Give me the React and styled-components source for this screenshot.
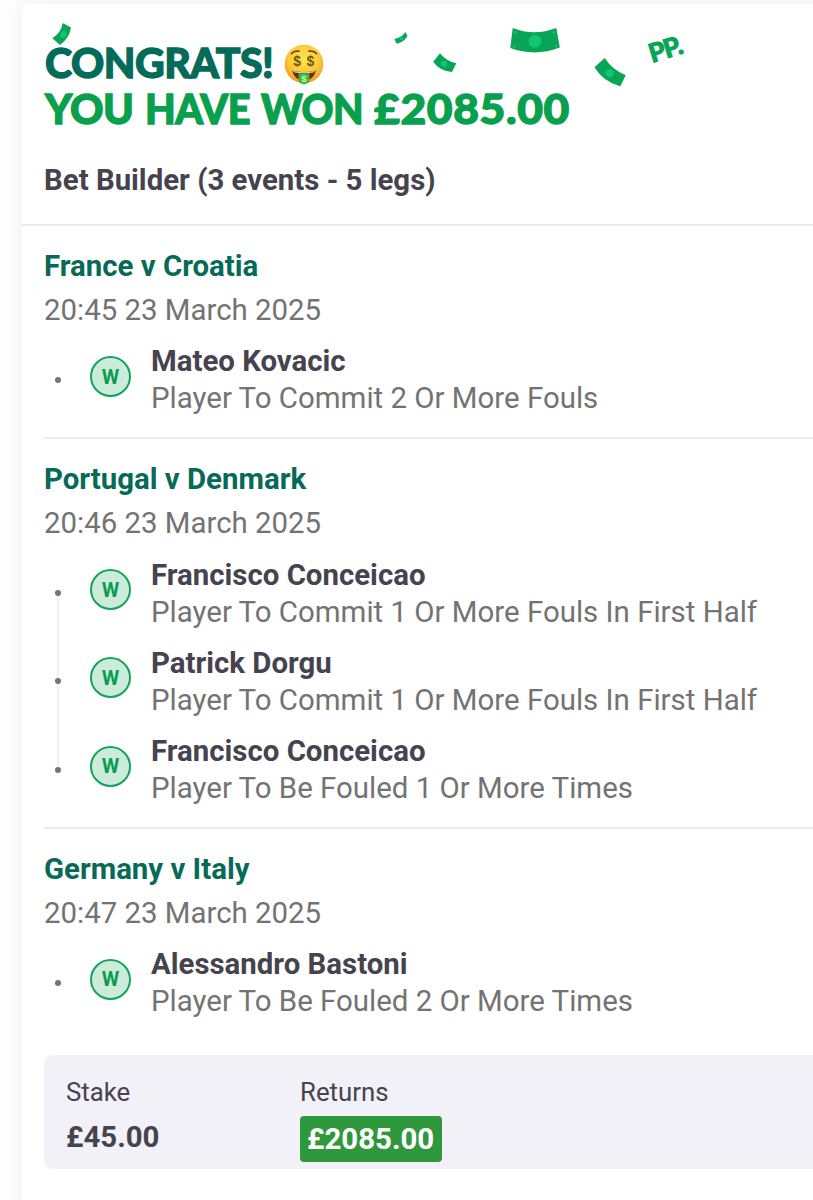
import React from 'react';
import styled, { createGlobalStyle } from 'styled-components';

const GlobalStyle = createGlobalStyle`
  *, *::before, *::after { box-sizing: border-box; }
  html, body { margin: 0; padding: 0; background: #fefefe; }
  body { overflow: hidden; font-family: Roboto, "Liberation Sans", sans-serif; color: #46434f; }
  h1, h2, h3, p, ul { margin: 0; padding: 0; font-weight: inherit; }
`;

const Page = styled.div`
  height: 1200px;
  overflow: hidden;
  padding: 4px 0 0 22px;
`;

const Card = styled.main`
  width: 820px;
  height: 1240px;
  background: #fff;
  border-radius: 8px 0 0 0;
  box-shadow: 0 0 22px rgba(0, 0, 0, 0.07);
`;

const Header = styled.header`
  position: relative;
  height: 222px;
  padding: 35px 0 0 22px;
  border-bottom: 2px solid #e9e9eb;
`;

const Headline = styled.h1`
  font-family: Lato, sans-serif;
  font-weight: 900;
  font-size: 42.5px;
  line-height: 46px;
`;

const HeadLine = styled.span`
  display: flex;
  height: 46px;
  padding-left: 1px;
  color: ${(p) => p.$color};
`;

const Word = styled.span`
  display: block;
  flex: none;
  width: ${(p) => p.$width}px;
  white-space: nowrap;
  letter-spacing: ${(p) => p.$spacing}px;
  transform: scaleX(${(p) => p.$stretch || 1});
  transform-origin: left center;
  -webkit-text-stroke: 1.3px currentColor;
`;

const Emoji = styled.svg`
  width: 40px;
  height: 42px;
  margin-top: 4px;
`;

const Confetti = styled.svg`
  position: absolute;
  left: 0;
  top: 0;
  width: 791px;
  height: 100px;
  pointer-events: none;
`;

const BetType = styled.h2`
  margin-top: 26.5px;
  font-size: 29.4px;
  font-weight: 700;
  line-height: 44px;
`;

const Event = styled.section`
  margin-left: 22px;
  padding: 18px 0 13px;
  border-bottom: 2px solid ${(p) => (p.$last ? 'transparent' : '#ececee')};
`;

const EventTitle = styled.h2`
  font-size: 29.4px;
  font-weight: 700;
  line-height: 44px;
  color: #066a57;
`;

const EventTime = styled.p`
  font-size: 29.4px;
  line-height: 44px;
  color: #737373;
`;

const Legs = styled.ul`
  padding-top: 4px;
  list-style: none;
`;

const Leg = styled.li`
  display: flex;
  height: 88.2px;
`;

const Rail = styled.span`
  display: flex;
  flex-direction: column;
  align-items: center;
  width: 27px;
  margin-right: 19px;
`;

const RailLine = styled.span`
  flex: 1;
  width: 2px;
  background: ${(p) => (p.$on ? '#f0f0f2' : 'transparent')};
`;

const Dot = styled.span`
  width: 6px;
  height: 6px;
  border-radius: 50%;
  background: #737379;
`;

const Badge = styled.span`
  display: flex;
  align-items: center;
  justify-content: center;
  width: 41px;
  height: 41px;
  margin: 20px 20px 0 0;
  border: 2px solid #14a35b;
  border-radius: 50%;
  background: #cdebdb;
  color: #0a9d50;
  font-size: 20px;
  font-weight: 700;
`;

const LegText = styled.div`
  padding-top: 7.4px;
  white-space: nowrap;
`;

const Player = styled.h3`
  font-size: 29.4px;
  font-weight: 700;
  line-height: 37px;
`;

const Market = styled.p`
  font-size: 29.45px;
  line-height: 36.8px;
  color: #737373;
`;

const Summary = styled.footer`
  display: flex;
  height: 114px;
  margin: 13px 0 0 22px;
  padding: 17px 0 0 22px;
  border-radius: 8px;
  background: #f2f1f8;
`;

const Amount = styled.div`
  width: 234px;
`;

const Label = styled.p`
  font-size: 25.8px;
  line-height: 40px;
`;

const Value = styled.p`
  margin-top: 4px;
  font-size: 29.4px;
  font-weight: 700;
  line-height: 43px;
`;

const Payout = styled(Value)`
  width: 142px;
  height: 46px;
  padding-left: 7px;
  line-height: 46px;
  border-radius: 4px;
  background: #2f983c;
  color: #fff;
`;

const events = [
  {
    title: 'France v Croatia',
    time: '20:45 23 March 2025',
    legs: [['Mateo Kovacic', 'Player To Commit 2 Or More Fouls']],
  },
  {
    title: 'Portugal v Denmark',
    time: '20:46 23 March 2025',
    legs: [
      ['Francisco Conceicao', 'Player To Commit 1 Or More Fouls In First Half'],
      ['Patrick Dorgu', 'Player To Commit 1 Or More Fouls In First Half'],
      ['Francisco Conceicao', 'Player To Be Fouled 1 Or More Times'],
    ],
  },
  {
    title: 'Germany v Italy',
    time: '20:47 23 March 2025',
    legs: [['Alessandro Bastoni', 'Player To Be Fouled 2 Or More Times']],
  },
];

const MoneyFace = () => (
  <Emoji viewBox="0 0 40 42">
    <defs>
      <radialGradient id="face" cx="50%" cy="38%" r="62%">
        <stop offset="0" stopColor="#ffe552" />
        <stop offset="0.65" stopColor="#fdc935" />
        <stop offset="1" stopColor="#f0962a" />
      </radialGradient>
    </defs>
    <circle cx="20" cy="21" r="19.3" fill="url(#face)" />
    <path d="M7.5 10.5Q10 7.5 15 8.2M25 8.2Q30 7.5 32.5 10.5" fill="none" stroke="#78431a" strokeWidth="1.7" strokeLinecap="round" />
    <path d="M8 27.5Q20 30.5 32 27.5Q29.5 37.5 20 37.5Q10.5 37.5 8 27.5Z" fill="#6b3012" />
    <path d="M9 28Q20 30.5 31 28L30.4 29.3Q20 31.6 9.6 29.3Z" fill="#f3dcae" />
    <path d="M14.6 30.3Q20 31.4 25.4 30.3V38Q25 40.2 20 41.6Q15 40.2 14.6 38Z" fill="#37bd3b" />
    <g fontFamily="Liberation Sans, sans-serif" textAnchor="middle">
      <text x="13.2" y="23.2" fontSize="14" fill="#75541a">$</text>
      <text x="26.4" y="23.2" fontSize="14" fill="#75541a">$</text>
      <text x="20" y="39" fontSize="9.5" fill="#d8f5b8">$</text>
    </g>
  </Emoji>
);

const Notes = () => (
  <Confetti viewBox="22 4 791 100">
    <g fill="#08a556">
      <path d="M62.7 23L71 27.5Q69.5 38 60 45L52.3 38.3Q61 33 62.7 23Z" />
      <path d="M394.3 39Q401.5 37.5 405.5 32L407.5 36.3Q403.5 42.5 396.7 43.8Z" />
      <path d="M440 53.3Q446.5 61.5 456.3 63.2L452 72Q439.5 71 433.2 61.8Z" />
      <path d="M512.7 28Q534 36.5 556.3 28L559.8 47.5Q535 57 510.3 48Z" />
      <path d="M604.7 58Q612.5 70 625.8 75.3L620.3 86.3Q603 81.5 594.5 67.2Z" />
    </g>
    <g fill="#10c675">
      <ellipse cx="63.5" cy="34.5" rx="3" ry="3.4" transform="rotate(30 63.5 34.5)" />
      <ellipse cx="401.5" cy="38.8" rx="1.8" ry="1.4" />
      <circle cx="444" cy="63.7" r="3" />
      <circle cx="535" cy="41.3" r="6.3" />
      <circle cx="609.8" cy="73.3" r="4" />
    </g>
    <g fill="#35b577">
      <circle cx="515.5" cy="32.3" r="1.2" />
      <circle cx="553.7" cy="32.3" r="1.2" />
      <circle cx="514" cy="46.2" r="1.2" />
      <circle cx="556" cy="46" r="1.2" />
    </g>
    <text transform="translate(652 63) rotate(-17)" fontFamily="Lato, sans-serif" fontWeight="900" fontSize="26" letterSpacing="-1.1" fill="#08a556" stroke="#08a556" strokeWidth="1">PP.</text>
  </Confetti>
);

export default function App() {
  return (
    <Page>
      <GlobalStyle />
      <Card>
        <Header>
          <Notes />
          <Headline>
            <HeadLine $color="#046b58">
              <Word $width={239} $spacing={-0.5} $stretch={0.965}>CONGRATS!</Word>
              <MoneyFace />
            </HeadLine>
            <HeadLine $color="#08a04c">
              <Word $width={100} $spacing={-0.5} $stretch={0.975}>YOU</Word>
              <Word $width={115.5} $spacing={-0.5} $stretch={0.935}>HAVE</Word>
              <Word $width={113} $spacing={-0.7} $stretch={0.93}>WON</Word>
              <Word $width={200} $spacing={0.6} $stretch={1.045}>£2085.00</Word>
            </HeadLine>
          </Headline>
          <BetType>Bet Builder (3 events - 5 legs)</BetType>
        </Header>
        {events.map((event, i) => (
          <Event key={event.title} $last={i === events.length - 1}>
            <EventTitle>{event.title}</EventTitle>
            <EventTime>{event.time}</EventTime>
            <Legs>
              {event.legs.map(([player, market], n) => (
                <Leg key={n}>
                  <Rail>
                    <RailLine $on={n > 0} />
                    <Dot />
                    <RailLine $on={n < event.legs.length - 1} />
                  </Rail>
                  <Badge>W</Badge>
                  <LegText>
                    <Player>{player}</Player>
                    <Market>{market}</Market>
                  </LegText>
                </Leg>
              ))}
            </Legs>
          </Event>
        ))}
        <Summary>
          <Amount>
            <Label>Stake</Label>
            <Value>£45.00</Value>
          </Amount>
          <Amount>
            <Label>Returns</Label>
            <Payout>£2085.00</Payout>
          </Amount>
        </Summary>
      </Card>
    </Page>
  );
}
